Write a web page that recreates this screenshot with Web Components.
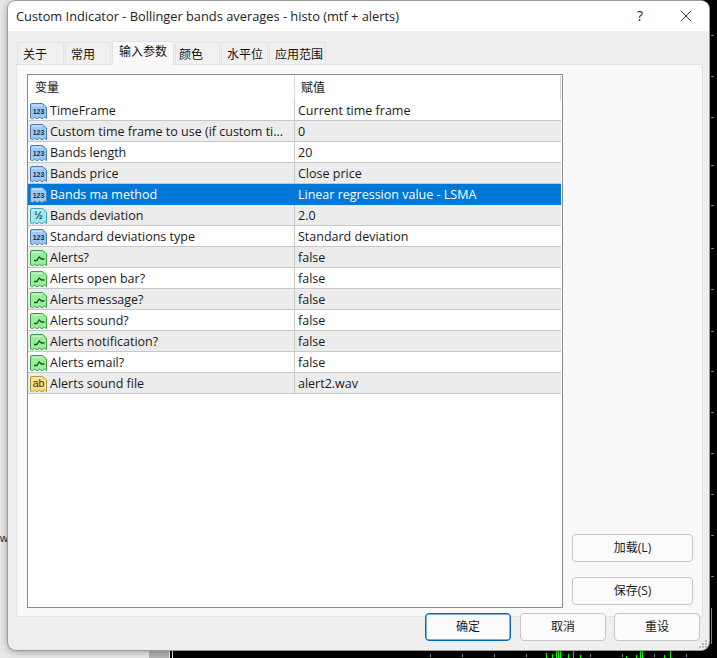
<!DOCTYPE html>
<html><head><meta charset="utf-8"><style>
html,body{margin:0;padding:0;width:717px;height:658px;overflow:hidden;background:#000}
body{font-family:"Open Sans","Noto Sans CJK SC",sans-serif}
</style></head><body>
<x-desktop>
<x-window title="Custom Indicator - Bollinger bands averages - histo (mtf + alerts)">
  <x-tabs>
    <x-tab w="47">关于</x-tab><x-tab w="46">常用</x-tab><x-tab w="62" pad="6" active>输入参数</x-tab><x-tab w="45" pad="3">颜色</x-tab><x-tab w="47">水平位</x-tab><x-tab w="57">应用范围</x-tab>
  </x-tabs>
  <x-panel>
    <x-list>
      <x-row icon="n" name="TimeFrame" value="Current time frame"></x-row>
      <x-row icon="n" alt name="Custom time frame to use (if custom ti..." value="0"></x-row>
      <x-row icon="n" name="Bands length" value="20"></x-row>
      <x-row icon="n" alt name="Bands price" value="Close price"></x-row>
      <x-row icon="n" selected name="Bands ma method" value="Linear regression value - LSMA"></x-row>
      <x-row icon="f" alt name="Bands deviation" value="2.0"></x-row>
      <x-row icon="n" name="Standard deviations type" value="Standard deviation"></x-row>
      <x-row icon="b" alt name="Alerts?" value="false"></x-row>
      <x-row icon="b" name="Alerts open bar?" value="false"></x-row>
      <x-row icon="b" alt name="Alerts message?" value="false"></x-row>
      <x-row icon="b" name="Alerts sound?" value="false"></x-row>
      <x-row icon="b" alt name="Alerts notification?" value="false"></x-row>
      <x-row icon="b" name="Alerts email?" value="false"></x-row>
      <x-row icon="s" alt name="Alerts sound file" value="alert2.wav"></x-row>
    </x-list>
    <x-side>
      <x-btn w="121">加载(L)</x-btn>
      <x-btn w="121">保存(S)</x-btn>
    </x-side>
  </x-panel>
  <x-footer>
    <x-btn w="86" primary style="margin-right:1px">确定</x-btn><x-btn w="86">取消</x-btn><x-btn w="86">重设</x-btn>
  </x-footer>
</x-window>
</x-desktop>
<script>
function def(name, css, html, init){
  customElements.define(name, class extends HTMLElement{
    constructor(){super();this.attachShadow({mode:'open'});}
    connectedCallback(){
      this.shadowRoot.innerHTML='<style>'+css+'</style>'+(typeof html==='function'?html(this):html);
      if(init)init(this);
    }
  });
}
const CJK='"Open Sans","Noto Sans CJK SC",sans-serif';
def('x-desktop',`
:host{display:block;position:relative;width:717px;height:658px;overflow:hidden;background:#000;padding:1px 8px 0;box-sizing:border-box}
.left{position:absolute;left:0;top:0;width:170px;height:658px;background:#e8e8e8}
.sh{position:absolute;left:149px;top:640px;width:20px;height:18px;background:#b4b4b4}
.ln{position:absolute;left:172px;top:640px;width:1px;height:18px;background:#e8e8e8}
.w{position:absolute;left:0;top:529px;font:11px/18px "Liberation Sans",sans-serif;color:#223}
.tk{position:absolute;background:#7d8a99}
.g{position:absolute;background:#0f0;width:1px}
.win{position:relative}
`,h=>{
  let s='<div class="left"></div><div class="sh"></div><div class="ln"></div><div class="w">w</div>';
  [35,76,117,165,205,248,289,331,371,412,453,494,535,576].forEach(y=>{s+=`<div class="tk" style="left:711px;top:${y}px;width:3px;height:1px"></div>`});
  [430,462,494,526,558,590,622,654,686].forEach(x=>{s+=`<div class="tk" style="left:${x}px;top:654px;width:1px;height:3px"></div>`});
  [[546,5],[552,4],[556,7],[558,7],[560,7],[568,4],[573,7],[580,3],[626,2],[636,3],[640,7],[642,7],[664,3],[670,7]].forEach(([x,t])=>{s+=`<div class="g" style="left:${x}px;top:${658-t}px;height:${t}px"></div>`});
  s+='<div class="g" style="left:711px;top:608px;height:36px"></div>';
  return s+'<div class="win"><slot></slot></div>';
});
def('x-window',`
:host{display:block;position:relative;width:701px;height:649px;background:#efefef;border-radius:8px;box-shadow:0 0 0 1px #9b9b9b,0 1px 9px rgba(0,0,0,.4);font-family:${CJK};color:#1a1a1a}
.tb{height:30px;background:#fff;border-radius:8px 8px 0 0;display:flex;align-items:center;padding:0 0 0 8px;font:12.83px/30px ${CJK};color:#222}
.t{flex:1;white-space:nowrap}
.help{width:46px;text-align:center;font-size:14px}
.close{width:46px;display:flex;justify-content:center}
.body{padding:10px 6px 0 8px}
.grip{position:absolute;right:2px;bottom:2px}
`,h=>`<div class="tb"><span class="t">${h.getAttribute('title')}</span><span class="help">?</span><span class="close"><svg width="12" height="12" viewBox="0 0 12 12"><path d="M.8.8 11.2 11.2M11.2.8.8 11.2" stroke="#333" fill="none"/></svg></span></div><div class="body"><slot></slot></div><svg class="grip" width="8" height="8" viewBox="0 0 8 8" fill="#bdbdbd"><rect x="6" y="0" width="2" height="2"/><rect x="3" y="3" width="2" height="2"/><rect x="6" y="3" width="2" height="2"/><rect x="0" y="6" width="2" height="2"/><rect x="3" y="6" width="2" height="2"/><rect x="6" y="6" width="2" height="2"/></svg>`);
def('x-tabs',`:host{display:flex;height:24px;padding-left:1px;gap:1px;margin-bottom:-1px;position:relative;z-index:1}`,'<slot></slot>');
def('x-tab',`
:host{display:block;box-sizing:border-box;height:22px;margin-top:1px;background:#f0f0f0;border:1px solid #e3e3e3;border-bottom:0;font:12px/23px ${CJK};color:#111;padding-left:5px}
:host([active]){height:24px;margin-top:0;background:#f9f9f9;line-height:20px;position:relative}
`,'<slot></slot>',el=>{el.style.width=el.getAttribute('w')+'px';if(el.getAttribute('pad'))el.style.paddingLeft=el.getAttribute('pad')+'px'});
def('x-panel',`
:host{display:flex;box-sizing:border-box;width:687px;height:553px;background:#f9f9f9;border:1px solid #e3e3e3;padding:9px 9px 8px 10px;position:relative}
`,'<slot></slot>');
def('x-list',`
:host{display:block;box-sizing:border-box;width:536px;height:534px;background:#fff;border:1px solid #8a8a94;position:relative;flex:none}
.h{display:flex;height:25px;font:12px/25px ${CJK};color:#111}
.a{width:267px;padding-left:7px;box-sizing:border-box;border-right:1px solid #d9d9d9}
.b{flex:1;padding-left:6px;position:relative}
.s{position:absolute;right:1px;top:1px;width:1px;height:24px;background:#d0d0d0}
`,`<div class="h"><div class="a">变量</div><div class="b">赋值<span class="s"></span></div></div><slot></slot>`);
const ICONS={n:['#9fc7f0','#4a7db5','123','#0f2f5c'],f:['#a2e8f0','#45a0b2','½','#0e4555'],b:['#9cec9c','#39a04b','','#0a5a1a'],s:['#f6df8a','#b4963c','ab','#3f3000']};
function icon(k){
  const [f,st,t,c]=ICONS[k];
  const body = k==='b'
    ? `<path d="M4 10.5H6.8L9.2 7 11.5 9H14.5" fill="none" stroke="#0b5a1d" stroke-width="1.3"/>`
    : `<text x="8.5" y="11" text-anchor="middle" font-family="Liberation Sans" font-weight="${k==='s'?400:700}" font-size="${k==='n'?7:k==='s'?10.5:10}" fill="${c}">${t}</text>`;
  return `<svg width="17" height="17" viewBox="0 0 17 17"><path d="M.5 2Q.5.5 2 .5H12.5L16.5 4V15.5L14.5 14 12 15.8 9.5 14.2 7 15.8 4.5 14.2 2.5 15.8 .5 14.8Z" fill="${f}" stroke="${st}"/><path d="M2 2.2H12" stroke="#fff" stroke-opacity=".6"/>${body}</svg>`;
}
def('x-row',`
:host{display:flex;height:21px;margin-right:1px;box-sizing:border-box;border-bottom:1px solid #c8c8c8;font:12.5px/20px ${CJK};color:#1a1a1a;background:#fff}
:host([alt]){background:#ececec}
:host([selected]){background:#0078d7;color:#fff;border-bottom-color:#0078d7}
.a{width:267px;box-sizing:border-box;display:flex;align-items:center;padding-left:2px;gap:3px;border-right:1px solid #c8c8c8;white-space:nowrap;overflow:hidden}
:host([selected]) .a{border-right-color:#0078d7}
svg{flex:none;margin-top:2px}
span{padding-top:1px}
.b{flex:1;padding:1px 0 0 3px;white-space:nowrap}
`,h=>`<div class="a">${icon(h.getAttribute('icon'))}<span>${h.getAttribute('name')}</span></div><div class="b">${h.getAttribute('value')}</div>`);
def('x-side',`:host{display:flex;flex-direction:column;gap:15px;justify-content:flex-end;margin-left:9px;padding-bottom:3px}`,'<slot></slot>');
def('x-footer',`:host{display:flex;gap:8px;justify-content:flex-end;margin-top:-4px;padding-right:3px;position:relative}`,'<slot></slot>');
def('x-btn',`
:host{display:block;box-sizing:border-box;height:28px;background:#fbfbfb;border:1px solid #c6c6c6;border-radius:4px;font:12px/26px ${CJK};text-align:center;color:#1a1a1a}
:host([primary]){border:1px solid #0067c0;box-shadow:inset 0 0 0 .5px #0067c0}
`,'<slot></slot>',el=>{el.style.width=el.getAttribute('w')+'px'});
</script>
</body></html>
